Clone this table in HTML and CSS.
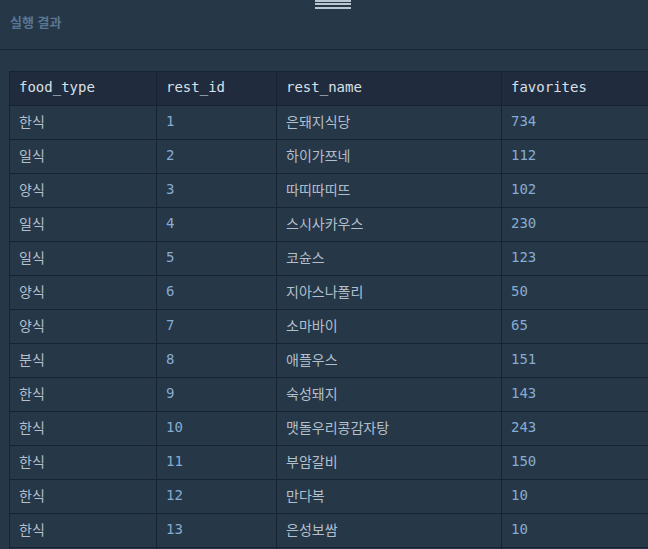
FILE: index.html
```html
<!DOCTYPE html>
<html lang="ko">
<head>
<meta charset="utf-8">
<link rel="stylesheet" href="styles.css">
</head>
<body>
<div class="panel">
  <div class="handle"><span class="l1"></span><span class="l2"></span><span class="l3"></span></div>
  <div class="panel-head"><h2 class="title">실행 결과</h2></div>
  <div class="result">
    <table class="grid">
      <colgroup><col class="c1"><col class="c2"><col class="c3"><col class="c4"></colgroup>
      <thead>
        <tr><th>food_type</th><th>rest_id</th><th>rest_name</th><th>favorites</th></tr>
      </thead>
      <tbody>
        <tr><td>한식</td><td class="num">1</td><td>은돼지식당</td><td class="num">734</td></tr>
        <tr><td>일식</td><td class="num">2</td><td>하이가쯔네</td><td class="num">112</td></tr>
        <tr><td>양식</td><td class="num">3</td><td>따띠따띠뜨</td><td class="num">102</td></tr>
        <tr><td>일식</td><td class="num">4</td><td>스시사카우스</td><td class="num">230</td></tr>
        <tr><td>일식</td><td class="num">5</td><td>코슌스</td><td class="num">123</td></tr>
        <tr><td>양식</td><td class="num">6</td><td>지아스나폴리</td><td class="num">50</td></tr>
        <tr><td>양식</td><td class="num">7</td><td>소마바이</td><td class="num">65</td></tr>
        <tr><td>분식</td><td class="num">8</td><td>애플우스</td><td class="num">151</td></tr>
        <tr><td>한식</td><td class="num">9</td><td>숙성돼지</td><td class="num">143</td></tr>
        <tr><td>한식</td><td class="num">10</td><td>맷돌우리콩감자탕</td><td class="num">243</td></tr>
        <tr><td>한식</td><td class="num">11</td><td>부암갈비</td><td class="num">150</td></tr>
        <tr><td>한식</td><td class="num">12</td><td>만다복</td><td class="num">10</td></tr>
        <tr><td>한식</td><td class="num">13</td><td>은성보쌈</td><td class="num">10</td></tr>
        <tr><td></td><td></td><td></td><td></td></tr>
      </tbody>
    </table>
  </div>
</div>
</body>
</html>
```
FILE: styles.css
```css
html, body {
  margin: 0;
  padding: 0;
  background: #263747;
  height: 100%;
  overflow: hidden;
}
.panel {
  position: relative;
  width: 648px;
  height: 549px;
  overflow: hidden;
  background: #263747;
}
.handle {
  position: absolute;
  left: 315px;
  top: 0;
  width: 36px;
  display: flex;
  flex-direction: column;
}
.handle span {
  display: block;
  height: 2px;
  background: #b9c6d1;
}
.handle .l2 { margin-top: 1px; }
.handle .l3 { margin-top: 2px; }
.panel-head {
  height: 49px;
  border-bottom: 1px solid #1a2634;
  box-sizing: content-box;
}
.title {
  margin: 0;
  padding: 13px 0 0 10px;
  font-family: "Noto Sans CJK KR", "Noto Sans", sans-serif;
  font-size: 13px;
  line-height: 18px;
  font-weight: 700;
  color: #5a7690;
}
.result {
  padding: 21px 0 0 9px;
}
.grid {
  border-collapse: collapse;
  table-layout: fixed;
  width: 720px;
}
.c1 { width: 147px; }
.c2 { width: 120px; }
.c3 { width: 225px; }
.c4 { width: 228px; }
.grid th, .grid td {
  border: 1px solid #172333;
  height: 34px;
  padding: 0 0 3px 9px;
  text-align: left;
  vertical-align: middle;
  white-space: nowrap;
  font-size: 14px;
  box-sizing: border-box;
}
.grid th {
  background: #202b3d;
  font-family: "DejaVu Sans Mono", monospace;
  font-weight: 400;
  color: #d7e0e8;
}
.grid td {
  font-family: "Noto Sans CJK KR", "Noto Sans", sans-serif;
  color: #b2bfcc;
}
.grid td.num {
  font-family: "DejaVu Sans Mono", monospace;
  color: #86acd2;
}
```
